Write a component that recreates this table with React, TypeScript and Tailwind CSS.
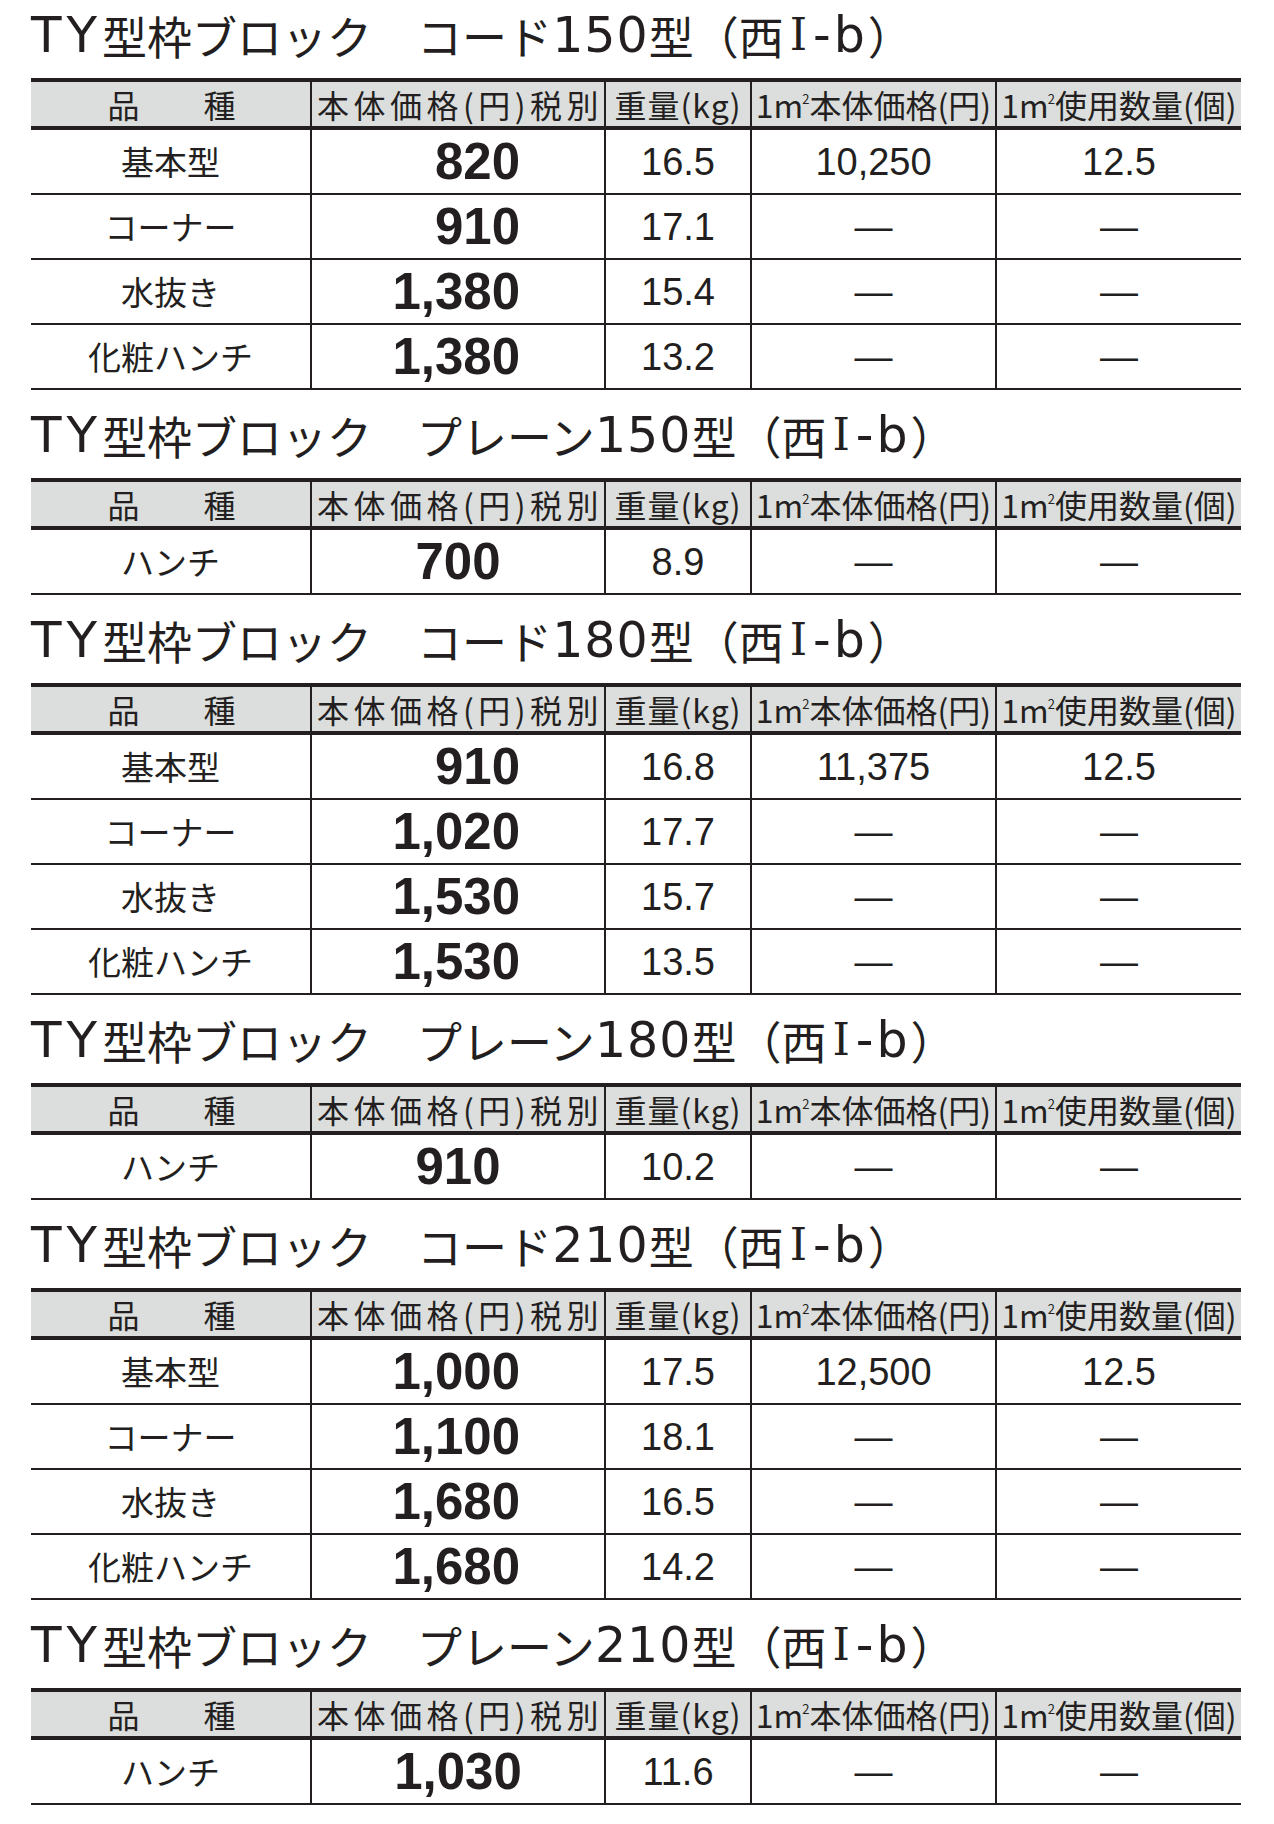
import React from "react";

type Row = [string, string, string, string, string];
type Section = { code: string; tail: string; align: "right" | "center"; rows: Row[] };

const sections: Section[] = [
  {
    code: "コード",
    tail: "150",
    align: "right",
    rows: [
      ["基本型", "820", "16.5", "10,250", "12.5"],
      ["コーナー", "910", "17.1", "—", "—"],
      ["水抜き", "1,380", "15.4", "—", "—"],
      ["化粧ハンチ", "1,380", "13.2", "—", "—"],
    ],
  },
  { code: "プレーン", tail: "150", align: "center", rows: [["ハンチ", "700", "8.9", "—", "—"]] },
  {
    code: "コード",
    tail: "180",
    align: "right",
    rows: [
      ["基本型", "910", "16.8", "11,375", "12.5"],
      ["コーナー", "1,020", "17.7", "—", "—"],
      ["水抜き", "1,530", "15.7", "—", "—"],
      ["化粧ハンチ", "1,530", "13.5", "—", "—"],
    ],
  },
  { code: "プレーン", tail: "180", align: "center", rows: [["ハンチ", "910", "10.2", "—", "—"]] },
  {
    code: "コード",
    tail: "210",
    align: "right",
    rows: [
      ["基本型", "1,000", "17.5", "12,500", "12.5"],
      ["コーナー", "1,100", "18.1", "—", "—"],
      ["水抜き", "1,680", "16.5", "—", "—"],
      ["化粧ハンチ", "1,680", "14.2", "—", "—"],
    ],
  },
  { code: "プレーン", tail: "210", align: "center", rows: [["ハンチ", "1,030", "11.6", "—", "—"]] },
];

const gridCols = "grid grid-cols-[279px_294px_146px_245px_246px]";

function Title({ code, tail }: { code: string; tail: string }) {
  return (
    <div className="h-[78px] flex items-center pb-[8px] text-[45px] leading-none text-[#231f20] font-['Noto_Sans_CJK_JP',sans-serif] whitespace-nowrap">
      <span className="font-['DejaVu_Sans',sans-serif] text-[50px] tracking-[5px]">TY</span>
      <span>型枠ブロック　{code}</span>
      <span className="font-['DejaVu_Sans',sans-serif] text-[49px] tracking-[1px]">{tail}</span>
      <span>型（西</span>
      <span className="font-['DejaVu_Serif',serif] font-light text-[44px] mx-[6px]">Ⅰ</span>
      <span className="font-['DejaVu_Sans',sans-serif] text-[49px] tracking-[3px]">-b</span>
      <span>）</span>
    </div>
  );
}

function M2() {
  return (
    <span>
      1m<span className="text-[13px] align-[14px] -ml-[1px]">2</span>
    </span>
  );
}

function Header() {
  const cell = "h-[44px] flex items-center justify-center";
  return (
    <div className={`${gridCols} bg-[#dcdddd] border-t-4 border-b-4 border-[#231f20] text-[32px] leading-none text-[#231f20] font-['Noto_Sans_CJK_JP',sans-serif] whitespace-nowrap`}>
      <div className={cell}>
        <span className="pl-[2px]">品　　種</span>
      </div>
      <div className={`${cell} border-l-2 border-[#231f20]`}>
        <span className="tracking-[4.5px] -mr-[4px]">本体価格(円)税別</span>
      </div>
      <div className={`${cell} border-l-2 border-[#231f20]`}>
        <span className="tracking-[1px]">重量(kg)</span>
      </div>
      <div className={`${cell} border-l-2 border-[#231f20]`}>
        <span>
          <M2 />本体価格(円)
        </span>
      </div>
      <div className={`${cell} border-l-2 border-[#231f20]`}>
        <span>
          <M2 />使用数量(個)
        </span>
      </div>
    </div>
  );
}

function DataRow({ row, align }: { row: Row; align: "right" | "center" }) {
  const cell = "h-[63px] flex items-center";
  const num = "font-['Liberation_Sans',Arial,sans-serif] text-[38px] leading-none";
  return (
    <div className={`${gridCols} border-b-2 border-[#231f20] text-[#231f20]`}>
      <div className={`${cell} justify-center font-['Noto_Sans_CJK_JP',sans-serif] text-[33px] leading-none`}>{row[0]}</div>
      <div
        className={`${cell} border-l-2 border-[#231f20] ${
          align === "right" ? "justify-end pr-[84px]" : "justify-center"
        } font-['Liberation_Sans',Arial,sans-serif] font-bold text-[51px] leading-none`}
      >
        {row[1]}
      </div>
      <div className={`${cell} justify-center border-l-2 border-[#231f20] ${num}`}>{row[2]}</div>
      <div className={`${cell} justify-center border-l-2 border-[#231f20] ${num}`}>{row[3]}</div>
      <div className={`${cell} justify-center border-l-2 border-[#231f20] ${num}`}>{row[4]}</div>
    </div>
  );
}

export default function App() {
  return (
    <div className="w-[1274px] min-h-[1824px] bg-white pl-[31px]">
      <div className="w-[1210px]">
        {sections.map((s, i) => (
          <div key={i} className={i === 0 ? "" : "mt-[10px]"}>
            <Title code={s.code} tail={s.tail} />
            <Header />
            {s.rows.map((r, j) => (
              <DataRow key={j} row={r} align={s.align} />
            ))}
          </div>
        ))}
      </div>
    </div>
  );
}
